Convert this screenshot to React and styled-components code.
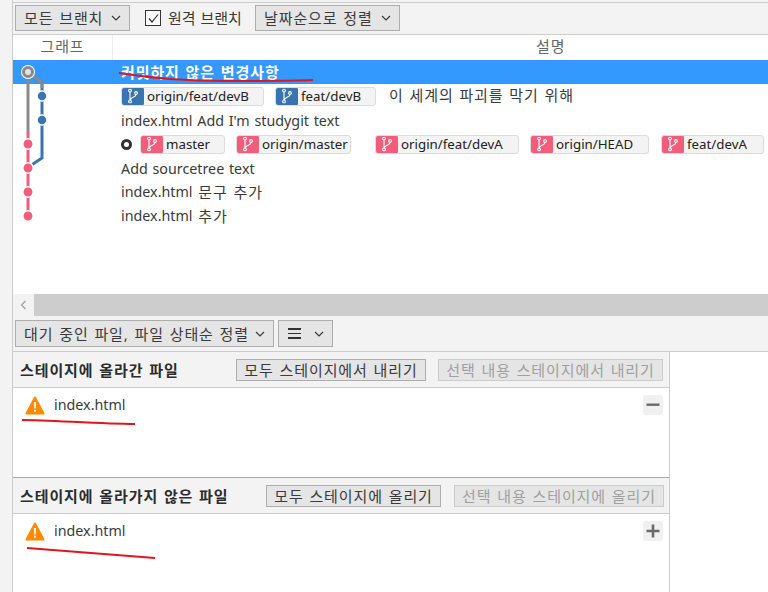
import React from 'react';
import styled, {createGlobalStyle} from 'styled-components';

const GlobalStyle = createGlobalStyle`
    html, body {
        margin: 0;
        padding: 0;
        background: #fff;
    }
    * {
        box-sizing: border-box;
    }
`

const BLUE = '#3a74ae';
const PINK = '#f25d7c';

function Chevron({size = 10, left}) {
    return (
        <svg width={size} height={size} viewBox="0 0 10 10" fill="none" stroke="currentColor" strokeWidth="1.2">
            <path d={left ? 'M6.5 1 L2.5 5 L6.5 9' : 'M1 3 L5 7 L9 3'} />
        </svg>
    )
}

function BranchIcon() {
    return (
        <svg width="16" height="16" viewBox="0 0 16 16" fill="none" stroke="#fff" strokeWidth="1.1">
            <circle cx="5" cy="2.6" r="1.4" />
            <circle cx="5" cy="13.4" r="1.4" />
            <circle cx="11" cy="5" r="1.4" />
            <path d="M5 4 V12 M11 6.4 C11 9.5 5.8 9 5 12" />
        </svg>
    )
}

function WarningIcon() {
    return (
        <svg width="20" height="19" viewBox="0 0 20 19">
            <path d="M10 1.5 L18.5 17.5 H1.5 Z" fill="#ff8a00" stroke="#ff8a00" strokeWidth="2" strokeLinejoin="round" />
            <path d="M9 6 H11 L10.7 12.5 H9.3 Z" fill="#fff" />
            <rect x="9" y="13.7" width="2" height="2" fill="#fff" />
        </svg>
    )
}

function Graph() {
    return (
        <svg width="99" height="168" viewBox="13 60 99 168">
            <path d="M28 72 V132" stroke="#8a8a8a" strokeWidth="3" fill="none" />
            <path d="M28 132 V216" stroke={PINK} strokeWidth="3" fill="none" />
            <path d="M33 76 L42 83 V158 L30 166" stroke={BLUE} strokeWidth="3" fill="none" />
            <path d="M33 76 L42 83 V88" stroke="#8a8a8a" strokeWidth="3" fill="none" />
            {[96, 120].map(y => (
                <circle key={y} cx="42" cy={y} r="5" fill={BLUE} stroke="#fff" strokeWidth="1.5" />
            ))}
            {[144, 168, 192, 216].map(y => (
                <circle key={y} cx="28" cy={y} r="5.2" fill={PINK} stroke="#fff" strokeWidth="1.5" />
            ))}
            <circle cx="28" cy="72" r="7" fill="#fff" />
            <circle cx="28" cy="72" r="4.5" fill="#dfe3e6" stroke="#8a8a8a" strokeWidth="3" />
        </svg>
    )
}

function Annotations() {
    return (
        <Overlay viewBox="0 0 768 592">
            <path d="M119 73 C150 78 185 81 225 81 C260 81 290 81 313 80" />
            <path d="M22 420 C50 420 100 424 135 424" />
            <path d="M27 548 L155 558" />
        </Overlay>
    )
}

function BranchTag({label, width, color, after}) {
    return (
        <Tag $width={width} $after={after}>
            <TagIcon $color={color}><BranchIcon /></TagIcon>
            {label}
        </Tag>
    )
}

function App() {
    return (
        <Page>
            <GlobalStyle />
            <Gutter />
            <Main>
                <TopStrip />
                <Toolbar>
                    <Select $width={115}>모든 브랜치 <Chevron /></Select>
                    <CheckLabel>
                        <CheckBox>
                            <svg width="13" height="13" viewBox="0 0 13 13" fill="none" stroke="#333" strokeWidth="1.2">
                                <path d="M2 6.5 L5 10 L11 2.5" />
                            </svg>
                        </CheckBox>
                        원격 브랜치
                    </CheckLabel>
                    <Select $width={145}>날짜순으로 정렬 <Chevron /></Select>
                </Toolbar>
                <ColumnHeader>
                    <GraphTitle>그래프</GraphTitle>
                    <DescTitle>설명</DescTitle>
                </ColumnHeader>
                <LogArea>
                    <SelectedBand />
                    <GraphColumn><Graph /></GraphColumn>
                    <RowList>
                        <Row><SelectedText>커밋하지 않은 변경사항</SelectedText></Row>
                        <Row>
                            <BranchTag label="origin/feat/devB" width={143} color={BLUE} />
                            <BranchTag label="feat/devB" width={101} color={BLUE} />
                            <CommitNote>이 세계의 파괴를 막기 위해</CommitNote>
                        </Row>
                        <Row $low><Latin>index.html Add I'm studygit text</Latin></Row>
                        <Row>
                            <HeadDot />
                            <BranchTag label="master" width={85} color={PINK} />
                            <BranchTag label="origin/master" width={115} color={PINK} after={24} />
                            <BranchTag label="origin/feat/devA" width={144} color={PINK} />
                            <BranchTag label="origin/HEAD" width={119} color={PINK} after={12} />
                            <BranchTag label="feat/devA" width={103} color={PINK} />
                        </Row>
                        <Row $low><Latin>Add sourcetree text</Latin></Row>
                        <Row><Latin>index.html</Latin>&nbsp;문구 추가</Row>
                        <Row><Latin>index.html</Latin>&nbsp;추가</Row>
                    </RowList>
                </LogArea>
                <ScrollBar>
                    <ScrollButton><Chevron left /></ScrollButton>
                    <ScrollTrack />
                </ScrollBar>
                <FilterBar>
                    <Select $width={259} $height={27}>대기 중인 파일, 파일 상태순 정렬 <Chevron /></Select>
                    <Select $width={55} $height={27}>
                        <Bars><i /><i /><i /></Bars>
                        <Chevron />
                    </Select>
                </FilterBar>
                <Panels>
                    <Panel $height={126}>
                        <PanelHeader $right={6}>
                            <PanelTitle>스테이지에 올라간 파일</PanelTitle>
                            <Action $width={190}>모두 스테이지에서 내리기</Action>
                            <Action $width={225} $left={12} disabled>선택 내용 스테이지에서 내리기</Action>
                        </PanelHeader>
                        <FileRow>
                            <WarningIcon />
                            <FileName>index.html</FileName>
                            <RowButton>
                                <svg width="14" height="14" viewBox="0 0 14 14"><rect x="0.5" y="5.5" width="13" height="2.4" fill="#6a6a6a" /></svg>
                            </RowButton>
                        </FileRow>
                    </Panel>
                    <Panel $last>
                        <PanelHeader $right={5}>
                            <PanelTitle>스테이지에 올라가지 않은 파일</PanelTitle>
                            <Action $width={175}>모두 스테이지에 올리기</Action>
                            <Action $width={210} $left={13} disabled>선택 내용 스테이지에 올리기</Action>
                        </PanelHeader>
                        <FileRow>
                            <WarningIcon />
                            <FileName>index.html</FileName>
                            <RowButton>
                                <svg width="14" height="14" viewBox="0 0 14 14"><path d="M0.5 7 H13.5 M7 0.5 V13.5" stroke="#6a6a6a" strokeWidth="2.6" /></svg>
                            </RowButton>
                        </FileRow>
                    </Panel>
                </Panels>
            </Main>
            <Annotations />
        </Page>
    )
}

export default App

const Page = styled.div`
    position: relative;
    width: 768px;
    height: 592px;
    display: flex;
    overflow: hidden;
    background: #fff;
    color: #3a3a3a;
    font-family: "Noto Sans", "Noto Sans CJK KR", sans-serif;
    font-size: 15px;
    line-height: 20px;
    letter-spacing: 0.9px;
    word-spacing: 1px;
`

const Latin = styled.span`
    font-size: 14.3px;
    letter-spacing: 0;
`

const Gutter = styled.div`
    width: 13px;
    flex: none;
    background: #f3f3f3;
    border-right: 1px solid #cccccc;
`

const Main = styled.div`
    flex: 1;
    min-width: 0;
    display: flex;
    flex-direction: column;
`

const TopStrip = styled.div`
    height: 3px;
    background: #f3f3f3;
    border-bottom: 1px solid #cccccc;
`

const Toolbar = styled.div`
    height: 32px;
    display: flex;
    align-items: flex-start;
    padding: 2px 0 0 2px;
    background: #f3f3f3;
    border-bottom: 1px solid #cccccc;
`

const Select = styled.div`
    width: ${props => props.$width}px;
    height: ${props => props.$height || 26}px;
    display: flex;
    align-items: center;
    justify-content: space-between;
    padding: 0 8px;
    background: #e5e5e5;
    border: 1px solid #adadad;
    white-space: nowrap;
`

const CheckLabel = styled.div`
    display: flex;
    align-items: center;
    gap: 7px;
    width: 110px;
    height: 26px;
    margin-left: 15px;
    letter-spacing: 0;
    white-space: nowrap;
`

const CheckBox = styled.span`
    width: 16px;
    height: 16px;
    flex: none;
    display: flex;
    align-items: center;
    justify-content: center;
    background: #fff;
    border: 1px solid #333;
`

const ColumnHeader = styled.div`
    height: 25px;
    display: flex;
    align-items: flex-start;
    color: #666;
    background: #fff;
`

const GraphTitle = styled.div`
    width: 100px;
    height: 100%;
    padding-top: 1px;
    text-align: center;
    border-right: 1px solid #ececec;
`

const DescTitle = styled.div`
    flex: 1;
    padding: 1px 0 0 423px;
`

const LogArea = styled.div`
    position: relative;
    height: 234px;
    display: flex;
    background: #fff;
`

const SelectedBand = styled.div`
    position: absolute;
    top: 0;
    left: 0;
    right: 0;
    height: 24px;
    background: #3399ff;
`

const GraphColumn = styled.div`
    position: relative;
    width: 108px;
    flex: none;
    height: 168px;
    svg {
        display: block;
    }
`

const RowList = styled.div`
    position: relative;
    flex: 1;
    min-width: 0;
    display: flex;
    flex-direction: column;
`

const Row = styled.div`
    height: 24px;
    display: flex;
    align-items: center;
    padding-top: ${props => props.$low ? 2 : 0}px;
    white-space: nowrap;
`

const SelectedText = styled.span`
    color: #fff;
    font-weight: 700;
`

const CommitNote = styled.span`
    margin: 0 0 2px 2px;
`

const HeadDot = styled.span`
    width: 11px;
    height: 11px;
    flex: none;
    margin-right: 8px;
    border: 3px solid #333;
    border-radius: 50%;
    background: #fff;
`

const Tag = styled.div`
    width: ${props => props.$width}px;
    height: 19px;
    display: flex;
    align-items: center;
    gap: 3px;
    margin-right: ${props => props.$after || 11}px;
    flex: none;
    color: #222;
    font-size: 13.3px;
    letter-spacing: 0;
    word-spacing: 0;
    background: #f3f3f3;
    border: 1px solid #dcdcdc;
    border-radius: 3px;
    overflow: hidden;
`

const TagIcon = styled.span`
    width: 23px;
    height: 19px;
    flex: none;
    display: flex;
    align-items: center;
    justify-content: center;
    margin-left: -1px;
    background: ${props => props.$color};
    border-radius: 3px;
`

const ScrollBar = styled.div`
    height: 22px;
    display: flex;
`

const ScrollButton = styled.div`
    width: 21px;
    display: flex;
    align-items: center;
    justify-content: center;
    color: #a0a0a0;
    background: #f3f3f3;
`

const ScrollTrack = styled.div`
    flex: 1;
    background: #cdcdcd;
`

const FilterBar = styled.div`
    height: 36px;
    display: flex;
    gap: 4px;
    padding: 4px 0 0 2px;
    background: #f3f3f3;
    border-bottom: 1px solid #cccccc;
`

const Bars = styled.span`
    display: flex;
    flex-direction: column;
    gap: 3px;
    width: 13px;
    margin-left: 1px;
    i {
        display: block;
        height: 1.5px;
        background: #333;
    }
`

const Panels = styled.div`
    flex: 1;
    width: 657px;
    display: flex;
    flex-direction: column;
    border-right: 1px solid #cccccc;
`

const Panel = styled.section`
    height: ${props => props.$height ? `${props.$height}px` : 'auto'};
    flex: ${props => props.$last ? 1 : 'none'};
    border-bottom: ${props => props.$last ? 'none' : '1px solid #a8a8a8'};
`

const PanelHeader = styled.div`
    height: 36px;
    display: flex;
    align-items: center;
    padding: 0 ${props => props.$right}px 0 7px;
    background: #f3f3f3;
    border-bottom: 1px solid #cccccc;
`

const PanelTitle = styled.div`
    flex: none;
    margin-right: auto;
    color: #2c2c2c;
    font-weight: 700;
    white-space: nowrap;
`

const Action = styled.div`
    width: ${props => props.$width}px;
    height: 22px;
    flex: none;
    display: flex;
    align-items: center;
    justify-content: center;
    margin-left: ${props => props.$left || 0}px;
    white-space: nowrap;
    background: #e5e5e5;
    border: 1px solid ${props => props.disabled ? '#cccccc' : '#adadad'};
    color: ${props => props.disabled ? '#a0a0a0' : '#3a3a3a'};
`

const FileRow = styled.div`
    height: 34px;
    display: flex;
    align-items: center;
    padding: 0 6px 0 12px;
    gap: 9px;
`

const FileName = styled.span`
    flex: 1;
    font-size: 14.3px;
    letter-spacing: 0;
`

const RowButton = styled.div`
    width: 20px;
    height: 20px;
    display: flex;
    align-items: center;
    justify-content: center;
    background: #f0f0f0;
    border-radius: 3px;
`

const Overlay = styled.svg`
    position: absolute;
    top: 0;
    left: 0;
    width: 768px;
    height: 592px;
    pointer-events: none;
    path {
        fill: none;
        stroke: #e3141f;
        stroke-width: 2;
    }
`
